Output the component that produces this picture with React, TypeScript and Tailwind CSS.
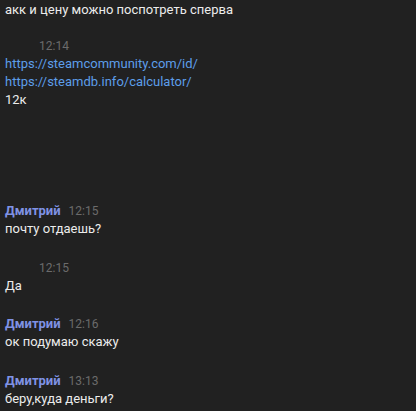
import React from "react";

type Msg = {
  name?: string;
  time: string;
  lines: { text: string; link?: boolean }[];
  gap: string;
};

const messages: Msg[] = [
  {
    name: "Дмитрий",
    time: "12:15",
    lines: [{ text: "почту отдаешь?" }],
    gap: "mt-[93px]",
  },
  { time: "12:15", lines: [{ text: "Да" }], gap: "mt-[21px]" },
  {
    name: "Дмитрий",
    time: "12:16",
    lines: [{ text: "ок подумаю скажу" }],
    gap: "mt-[20px]",
  },
  {
    name: "Дмитрий",
    time: "13:13",
    lines: [{ text: "беру,куда деньги?" }],
    gap: "mt-[21px]",
  },
];

function Header({ name, time }: { name?: string; time: string }) {
  return (
    <div className="flex items-center h-[18px]">
      {name ? (
        <span className="font-bold text-[#7f92e4] mr-[8px]">{name}</span>
      ) : (
        <span className="w-[34px]" />
      )}
      <span className="text-[#6b6b6b] text-[12px]">{time}</span>
    </div>
  );
}

function Line({ text, link }: { text: string; link?: boolean }) {
  return (
    <div
      className={
        "h-[18px] leading-[18px] " +
        (link ? "text-[#5d9eea]" : "text-[#ececec]")
      }
    >
      {text}
    </div>
  );
}

export default function App() {
  return (
    <div
      className="w-[416px] h-[411px] overflow-hidden bg-[#212121] px-[5px] pt-[1px] text-[13px] leading-[18px]"
      style={{ fontFamily: "Roboto, 'Noto Sans', sans-serif" }}
    >
      <Line text="акк и цену можно поспотреть сперва" />
      <div className="mt-[18px]">
        <Header time="12:14" />
        <Line text="https://steamcommunity.com/id/" link />
        <Line text="https://steamdb.info/calculator/" link />
        <Line text="12к" />
      </div>
      {messages.map((m, i) => (
        <div key={i} className={m.gap}>
          <Header name={m.name} time={m.time} />
          {m.lines.map((l, j) => (
            <Line key={j} text={l.text} link={l.link} />
          ))}
        </div>
      ))}
    </div>
  );
}
